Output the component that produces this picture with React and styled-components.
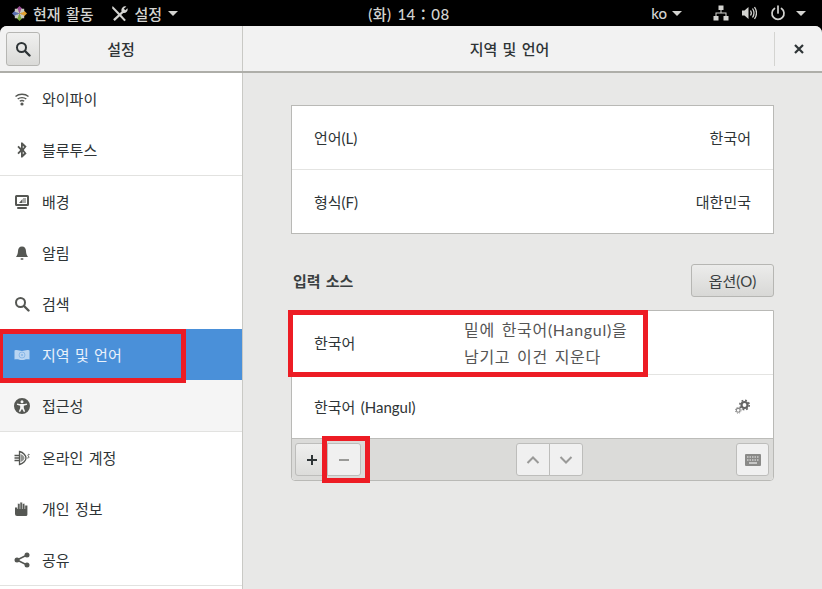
import styled, { createGlobalStyle } from "styled-components";

const GlobalCss = createGlobalStyle`
    html, body {
        margin: 0;
        padding: 0;
        background: #000;
    }
    * {
        box-sizing: border-box;
    }
    body {
        font-family: "Lato", "Noto Sans CJK KR", sans-serif;
        font-size: 15px;
        word-spacing: 1.5px;
        color: #2e3436;
    }
`;

const Screen = styled.div`
    position: relative;
    width: 822px;
    height: 589px;
    overflow: hidden;
    background: #000;
    display: flex;
    flex-direction: column;
`;

const TopBar = styled.div`
    height: 26px;
    flex: none;
    display: grid;
    grid-template-columns: 1fr auto 1fr;
    align-items: center;
    padding: 0 16px 0 12px;
    color: #d3d3d0;
    font-size: 15px;
    font-weight: 500;
`;

const BarGroup = styled.div`
    display: flex;
    align-items: center;
    justify-content: ${(p) => (p.$end ? "flex-end" : "flex-start")};
`;

const BarText = styled.span`
    margin-left: ${(p) => p.$left || 0}px;
    letter-spacing: ${(p) => p.$spacing || 0}px;
    white-space: nowrap;
`;

const BarIcon = styled.svg`
    flex: none;
    margin-left: ${(p) => p.$left || 0}px;
    display: block;
`;

const Arrow = styled.i`
    flex: none;
    margin-left: ${(p) => p.$left || 6}px;
    width: 0;
    height: 0;
    border-left: 5px solid transparent;
    border-right: 5px solid transparent;
    border-top: 5px solid #d3d3d0;
`;

const Window = styled.div`
    flex: 1;
    min-height: 0;
    display: flex;
    flex-direction: column;
    background: #e8e8e7;
    border-radius: 7px 7px 0 0;
    overflow: hidden;
`;

const Header = styled.div`
    height: 47px;
    flex: none;
    display: flex;
    background: #f2f2f2;
    border-bottom: 2px solid #aeaea9;
`;

const HeaderLeft = styled.div`
    width: 243px;
    flex: none;
    display: flex;
    align-items: center;
    padding-left: 6px;
    border-right: 1px solid #c9c9c5;
`;

const HeaderRight = styled.div`
    flex: 1;
    display: flex;
    align-items: center;
`;

const HeaderTitle = styled.div`
    flex: 1;
    text-align: center;
    font-size: 15px;
    font-weight: 500;
    color: #2e3436;
    padding-left: ${(p) => p.$padLeft || 0}px;
    padding-right: ${(p) => p.$pad || 0}px;
`;

const SearchBtn = styled.button`
    width: 34px;
    height: 34px;
    flex: none;
    padding: 0;
    display: flex;
    align-items: center;
    justify-content: center;
    border: 1px solid #b6b6b3;
    border-radius: 3px;
    background: linear-gradient(#f0f0ef, #dadad8);
`;

const CloseArea = styled.div`
    width: 48px;
    height: 34px;
    flex: none;
    display: flex;
    align-items: center;
    justify-content: center;
    border-left: 1px solid #d4d4d1;
`;

const Body = styled.div`
    flex: 1;
    min-height: 0;
    display: flex;
`;

const Sidebar = styled.div`
    width: 243px;
    flex: none;
    background: #fff;
    border-right: 1px solid #c9c9c5;
`;

const NavRow = styled.div`
    height: ${(p) => (p.$line ? 52 : 51)}px;
    display: flex;
    align-items: center;
    padding-left: 14px;
    font-size: 15px;
    color: ${(p) => (p.$active ? "#eaf2fb" : "#2e3436")};
    background: ${(p) => (p.$active ? "#4a90d9" : p.$hover ? "#f5f5f5" : "#fff")};
    border-bottom: ${(p) => (p.$line ? "1px solid #e2e2e0" : "none")};
`;

const NavIcon = styled.svg`
    width: 16px;
    height: 16px;
    flex: none;
    margin-right: ${(p) => (p.$bare ? 0 : 12)}px;
    display: block;
    color: ${(p) => (p.$active ? "#b9d5f2" : p.$bare ? "#2e3436" : "#555753")};
`;

const Content = styled.div`
    flex: 1;
    min-width: 0;
    padding: 32px 48px 0 48px;
`;

const Panel = styled.div`
    background: #fff;
    border: 1px solid #b9b9b6;
    border-radius: ${(p) => (p.$round ? "0 0 4px 4px" : "0")};
`;

const ListRow = styled.div`
    height: ${(p) => p.$h || 64}px;
    display: flex;
    align-items: center;
    justify-content: space-between;
    padding: 0 22px 0 22px;
    font-size: 15px;
    color: #2e3436;
    border-bottom: ${(p) => (p.$line ? "1px solid #e4e4e2" : "none")};
`;

const SectionHead = styled.div`
    display: flex;
    align-items: center;
    justify-content: space-between;
    margin: 30px 0 13px;
    height: 33px;
`;

const SectionTitle = styled.div`
    padding-left: 2px;
    font-size: 15px;
    font-weight: 700;
    color: #3a3f41;
`;

const OptionBtn = styled.button`
    width: 83px;
    height: 33px;
    padding: 0;
    font-family: inherit;
    font-size: 15px;
    color: #3a3f41;
    border: 1px solid #b6b6b3;
    border-radius: 3px;
    background: linear-gradient(#ececeb, #d8d8d6);
`;

const ToolBar = styled.div`
    height: 42px;
    display: flex;
    align-items: center;
    justify-content: space-between;
    padding: 0 4px 0 3px;
    background: #dbdbd9;
    border-top: 1px solid #bcbcb9;
    border-radius: 0 0 4px 4px;
`;

const BtnGroup = styled.div`
    display: flex;
    margin-left: ${(p) => p.$shift || 0}px;
`;

const ToolBtn = styled.button`
    width: ${(p) => p.$w || 33}px;
    height: 33px;
    padding: 0;
    display: flex;
    align-items: center;
    justify-content: center;
    border: 1px solid #bdbdbb;
    margin-left: ${(p) => (p.$joined ? "-1px" : "0")};
    border-radius: ${(p) =>
        p.$side === "left" ? "3px 0 0 3px" : p.$side === "right" ? "0 3px 3px 0" : "3px"};
    background: ${(p) => (p.$on ? "linear-gradient(#efefee, #dcdcda)" : "#f0f0f0")};
`;

const RedBox = styled.div`
    position: absolute;
    border-style: solid;
    border-color: #ed1c24;
    border-width: ${(p) => p.$w || "5px"};
    pointer-events: none;
    left: ${(p) => p.$x}px;
    top: ${(p) => p.$y}px;
    width: ${(p) => p.$width}px;
    height: ${(p) => p.$height}px;
`;

const Note = styled.div`
    position: absolute;
    left: 464px;
    top: 316px;
    font-size: 16px;
    line-height: 27px;
    letter-spacing: 0.7px;
    word-spacing: 2px;
    color: #555;
    white-space: nowrap;
`;

const Wifi = () => (
    <NavIcon viewBox="0 0 16 16" fill="none" stroke="currentColor">
        <path d="M1.5 5.5C5 2.5 11 2.5 14.5 5.5" strokeWidth="1.4" />
        <path d="M3.7 8C6 6.1 10 6.1 12.3 8" strokeWidth="1.4" />
        <path d="M5.8 10.3C7 9.4 9 9.4 10.2 10.3" strokeWidth="1.4" />
        <circle cx="8" cy="13" r="1.6" fill="currentColor" stroke="none" />
    </NavIcon>
);

const Bluetooth = () => (
    <NavIcon viewBox="0 0 16 16" fill="currentColor">
        <path d="M7 0.5h1.4l4.2 4.1L9.8 8l2.8 3.4-4.2 4.1H7V10L4.6 12.2 3.4 11 6.2 8 3.4 5l1.2-1.2L7 6V.5zm1.8 3.2v2.6l1.3-1.3-1.3-1.3zm0 6v2.6l1.3-1.3-1.3-1.3z" fillRule="evenodd" />
    </NavIcon>
);

const Background = () => (
    <NavIcon viewBox="0 0 16 16" fill="currentColor">
        <path d="M2.5 1h11A1.5 1.5 0 0 1 15 2.5v8a1.5 1.5 0 0 1-1.5 1.5h-11A1.5 1.5 0 0 1 1 10.5v-8A1.5 1.5 0 0 1 2.5 1zM3 3v7h10V3H3z" fillRule="evenodd" />
        <path d="M5 9l3.5-4V9z" />
        <rect x="9" y="4" width="3" height="5" opacity=".5" />
        <rect x="3" y="13" width="10" height="2" rx="1" />
    </NavIcon>
);

const Bell = () => (
    <NavIcon viewBox="0 0 16 16" fill="currentColor">
        <path d="M8 1.5c2.6 0 3.9 2 4 4.5.1 2.8.8 4.3 2 6H2c1.2-1.7 1.9-3.2 2-6 .1-2.5 1.4-4.5 4-4.5z" />
        <rect x="6.5" y="13.3" width="3" height="1.4" rx=".7" />
    </NavIcon>
);

const Search = ({ bare }) => (
    <NavIcon $bare={bare} viewBox="0 0 16 16" fill="none" stroke="currentColor">
        <circle cx="6.5" cy="6.5" r="4.5" strokeWidth="2" />
        <path d="M10 10l4.5 4.5" strokeWidth="2.4" strokeLinecap="round" />
    </NavIcon>
);

const Flag = () => (
    <NavIcon $active viewBox="0 0 16 16" fill="currentColor">
        <path d="M.5 3.5c3-1.2 5 .4 7.5.4s4.500-1.600 7.500-.4v9c-3-1-5 .4-7.500.4s-4.500-1.400-7.500-.4v-9z" />
        <circle cx="8" cy="8" r="3" fill="none" stroke="#4a90d9" strokeWidth=".9" opacity=".45" />
        <circle cx="8" cy="8" r="1" fill="#4a90d9" opacity=".45" />
    </NavIcon>
);

const Access = () => (
    <NavIcon viewBox="0 0 16 16" fill="currentColor">
        <path fillRule="evenodd" d="M8 0a8 8 0 1 1 0 16A8 8 0 0 1 8 0zm0 2.3a1.5 1.5 0 1 0 0 3 1.5 1.5 0 0 0 0-3zM3.2 5.5l-.4 1.3 3.4 1V10l-1.4 3.5 1.3.5L8 10.8 9.9 14l1.3-.5L9.8 10V7.8l3.4-1-.4-1.3C10 6.3 6 6.3 3.2 5.5z" />
    </NavIcon>
);

const Online = () => (
    <NavIcon viewBox="0 0 16 16" fill="none" stroke="currentColor">
        <path d="M5.5 1.5C9.5 2.5 12 5.5 12 8s-2.5 5.5-6.5 6.5V1.5z" strokeWidth="1.3" />
        <path d="M6.5 4C8.8 5 10.5 6.500 10.5 8s-1.700 3-4 4z" fill="currentColor" stroke="none" opacity=".65" />
        <path d="M.5 5.5h5M.5 8h5M.5 10.5h5" strokeWidth="1.4" />
        <path d="M15.5 4.5c-1.5-.6-2 .6-1.200 1.500.9 1 .7 2.500-1 2" strokeWidth="1" />
    </NavIcon>
);

const Hand = () => (
    <NavIcon viewBox="0 0 16 16" fill="currentColor">
        <path d="M1 6.5h2.6V2.800H6V1.500h2.400v1.300h2.400v1.600h2.600v9.100A1.500 1.500 0 0 1 11.900 15H3a2 2 0 0 1-2-2z" />
        <path d="M3.6 3v5M6 1.5V8M8.4 1.500V8M10.800 3v5" stroke="#fff" strokeWidth=".6" />
    </NavIcon>
);

const Share = () => (
    <NavIcon viewBox="0 0 16 16" fill="currentColor" stroke="currentColor">
        <path d="M3 8l10-5M3 8l10 5" strokeWidth="1.5" />
        <circle cx="3" cy="8" r="2.5" stroke="none" />
        <circle cx="13" cy="3" r="2.5" stroke="none" />
        <circle cx="13" cy="13" r="2.5" stroke="none" />
    </NavIcon>
);

const navItems = [
    { label: "와이파이", Icon: Wifi },
    { label: "블루투스", Icon: Bluetooth, line: true },
    { label: "배경", Icon: Background },
    { label: "알림", Icon: Bell },
    { label: "검색", Icon: Search },
    { label: "지역 및 언어", Icon: Flag, active: true },
    { label: "접근성", Icon: Access, hover: true, line: true },
    { label: "온라인 계정", Icon: Online },
    { label: "개인 정보", Icon: Hand },
    { label: "공유", Icon: Share, line: true },
];

const App = () => {
    return (
        <>
            <GlobalCss />
            <Screen>
                <TopBar>
                    <BarGroup>
                        <svg width="15" height="15" viewBox="0 0 16 16">
                            <path d="M8 0l3 3-3 5-3-5z" fill="#9b4f96" />
                            <path d="M16 8l-3 3-5-3 5-3z" fill="#e0a030" />
                            <path d="M8 16l-3-3 3-5 3 5z" fill="#7aa83c" />
                            <path d="M0 8l3-3 5 3-5 3z" fill="#5a6fb0" />
                            <path d="M3 3h3l2 5-5-2zM13 3v3l-5 2 2-5zM13 13h-3l-2-5 5 2zM3 13v-3l5-2-2 5z" fill="#c9c9c0" />
                        </svg>
                        <BarText $left={6}>현재 활동</BarText>
                        <BarIcon $left={17} width="17" height="17" viewBox="0 0 16 16" fill="#d3d3d0">
                            <path d="M1.5 1L8 7.5 14 14l-1.5 1.3L1 3z" />
                            <path d="M14.5 1.5a3.5 3.5 0 0 0-4.5 4.5L2 13.5 3.5 15l8-7.5a3.5 3.5 0 0 0 4-4.5L13.5 5 12 3.5z" />
                        </BarIcon>
                        <BarText $left={7}>설정</BarText>
                        <Arrow />
                    </BarGroup>
                    <BarText $spacing={0.5}>(화) 14：08</BarText>
                    <BarGroup $end>
                        <BarText>ko</BarText>
                        <Arrow $left={5} />
                        <BarIcon $left={31} width="16" height="16" viewBox="0 0 16 16" fill="#d3d3d0">
                            <rect x="5.5" y=".5" width="5" height="4.5" />
                            <rect x=".5" y="11" width="5" height="4.5" />
                            <rect x="10.5" y="11" width="5" height="4.5" />
                            <path d="M7.5 5h1v2.5H13.5V11h-1V8.5h-9V11h-1V7.5H7.5z" />
                        </BarIcon>
                        <BarIcon $left={12} width="16" height="16" viewBox="0 0 16 16" fill="none" stroke="#d3d3d0">
                            <path d="M1 5.5h2.5L7.5 2v12L3.5 10.5H1z" fill="#d3d3d0" stroke="none" />
                            <path d="M9.5 5.5c1 1.5 1 3.5 0 5" strokeWidth="1.3" />
                            <path d="M11.5 3.5c1.8 2.7 1.8 6.3 0 9" strokeWidth="1.3" />
                            <path d="M13.5 2c2.4 3.6 2.4 8.4 0 12" strokeWidth="1.3" />
                        </BarIcon>
                        <BarIcon $left={13} width="16" height="16" viewBox="0 0 16 16" fill="none" stroke="#d3d3d0" strokeWidth="1.7">
                            <path d="M8 1v7" strokeLinecap="round" />
                            <path d="M4.5 3.5a6 6 0 1 0 7 0" strokeLinecap="round" />
                        </BarIcon>
                        <Arrow $left={10} />
                    </BarGroup>
                </TopBar>

                <Window>
                    <Header>
                        <HeaderLeft>
                            <SearchBtn><Search bare /></SearchBtn>
                            <HeaderTitle $pad={40}>설정</HeaderTitle>
                        </HeaderLeft>
                        <HeaderRight>
                            <HeaderTitle $padLeft={2}>지역 및 언어</HeaderTitle>
                            <CloseArea>
                                <svg width="10" height="10" viewBox="0 0 10 10" stroke="#2e3436" strokeWidth="2.2">
                                    <path d="M1 1l8 8M9 1l-8 8" />
                                </svg>
                            </CloseArea>
                        </HeaderRight>
                    </Header>

                    <Body>
                        <Sidebar>
                            {navItems.map(({ label, Icon, active, hover, line }) => (
                                <NavRow key={label} $active={active} $hover={hover} $line={line}>
                                    <Icon />
                                    {label}
                                </NavRow>
                            ))}
                        </Sidebar>

                        <Content>
                            <Panel>
                                <ListRow $line>
                                    <span>언어(L)</span>
                                    <span>한국어</span>
                                </ListRow>
                                <ListRow $h={63}>
                                    <span>형식(F)</span>
                                    <span>대한민국</span>
                                </ListRow>
                            </Panel>

                            <SectionHead>
                                <SectionTitle>입력 소스</SectionTitle>
                                <OptionBtn>옵션(O)</OptionBtn>
                            </SectionHead>

                            <Panel $round>
                                <ListRow $line>
                                    <span>한국어</span>
                                </ListRow>
                                <ListRow $h={63}>
                                    <span>한국어 (Hangul)</span>
                                    <svg width="16" height="16" viewBox="0 0 16 16" fill="none">
                                        <circle cx="9.5" cy="6" r="3" stroke="#666" strokeWidth="2.2" />
                                        <circle cx="9.5" cy="6" r="4.7" stroke="#666" strokeWidth="1.6" strokeDasharray="1.8 1.9" />
                                        <circle cx="3.2" cy="11.3" r="1.9" stroke="#888" strokeWidth="1.1" />
                                        <circle cx="3.2" cy="11.3" r="2.9" stroke="#888" strokeWidth="1" strokeDasharray="1.2 1.1" />
                                    </svg>
                                </ListRow>
                                <ToolBar>
                                    <BtnGroup>
                                        <ToolBtn $side="left" $on>
                                            <svg width="12" height="12" viewBox="0 0 12 12" stroke="#2e3436" strokeWidth="2">
                                                <path d="M6 1v10M1 6h10" />
                                            </svg>
                                        </ToolBtn>
                                        <ToolBtn $side="right" $joined $w={34}>
                                            <svg width="12" height="12" viewBox="0 0 12 12" stroke="#9a9a98" strokeWidth="2">
                                                <path d="M1 6h10" />
                                            </svg>
                                        </ToolBtn>
                                    </BtnGroup>
                                    <BtnGroup $shift={2}>
                                        <ToolBtn $side="left" $w={34}>
                                            <svg width="14" height="10" viewBox="0 0 14 10" fill="none" stroke="#9a9a98" strokeWidth="2">
                                                <path d="M1.5 8L7 2.5 12.5 8" />
                                            </svg>
                                        </ToolBtn>
                                        <ToolBtn $side="right" $joined $w={34}>
                                            <svg width="14" height="10" viewBox="0 0 14 10" fill="none" stroke="#9a9a98" strokeWidth="2">
                                                <path d="M1.5 2L7 7.5 12.5 2" />
                                            </svg>
                                        </ToolBtn>
                                    </BtnGroup>
                                    <ToolBtn>
                                        <svg width="16" height="12" viewBox="0 0 16 12">
                                            <rect width="16" height="12" rx="1" fill="#8a8a88" />
                                            <path d="M2 3h12M2 6h12" stroke="#f0f0f0" strokeWidth="1" strokeDasharray="1.5 1" />
                                            <path d="M4 9h8" stroke="#f0f0f0" strokeWidth="1.2" />
                                        </svg>
                                    </ToolBtn>
                                </ToolBar>
                            </Panel>
                        </Content>
                    </Body>
                </Window>

                <RedBox $x={0} $y={329} $width={186} $height={54} $w="5px 5px 5px 3px" />
                <RedBox $x={288} $y={310} $width={360} $height={67} />
                <RedBox $x={322} $y={436} $width={48} $height={47} />
                <Note>
                    밑에 한국어(Hangul)을
                    <br />
                    남기고 이건 지운다
                </Note>
            </Screen>
        </>
    );
};

export default App;
